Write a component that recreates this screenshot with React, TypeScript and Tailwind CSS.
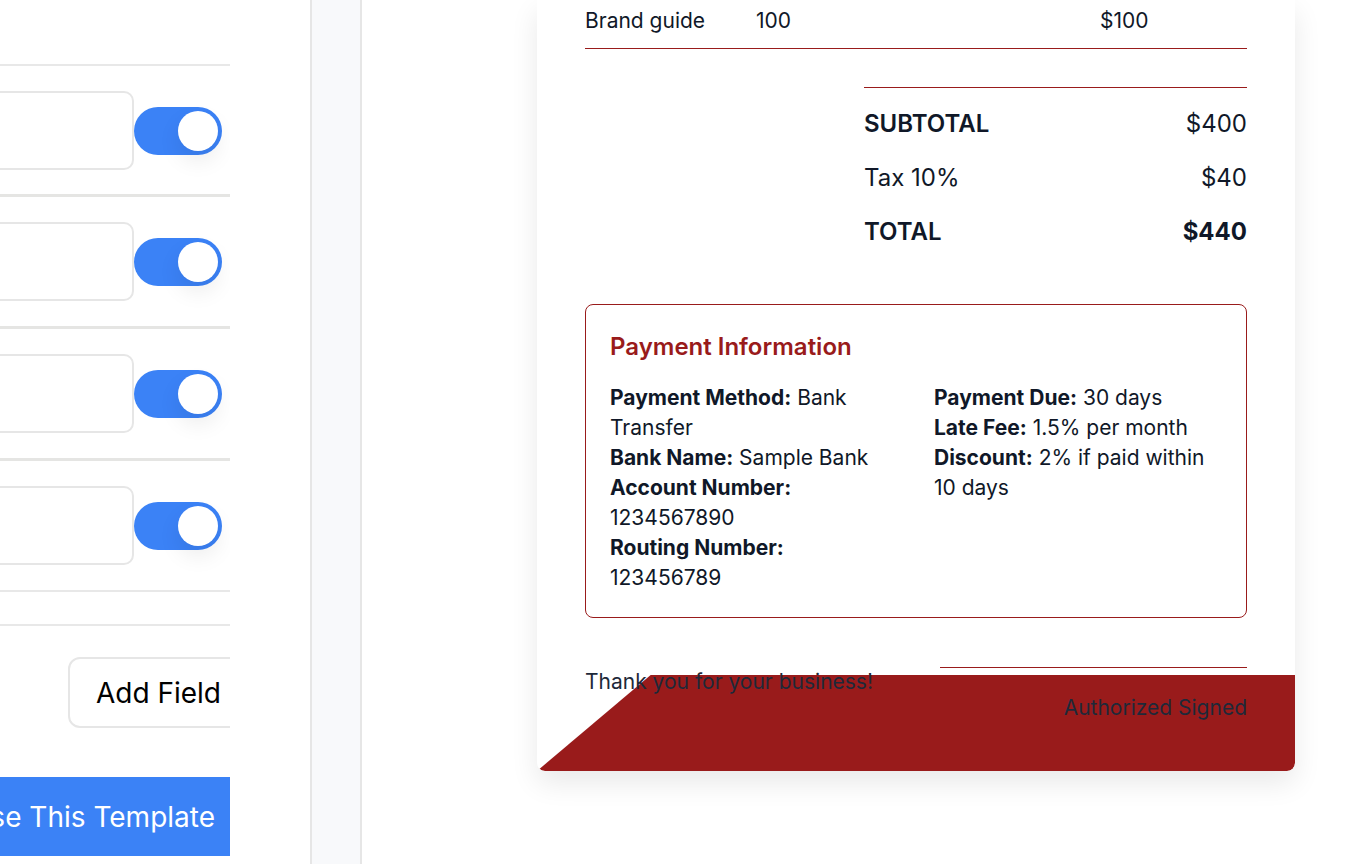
import React from "react";

const fieldRows = [0, 1, 2, 3];

const totals = [
  { label: "SUBTOTAL", value: "$400", strong: "label" },
  { label: "Tax 10%", value: "$40", strong: "none" },
  { label: "TOTAL", value: "$440", strong: "both" },
];

function Toggle() {
  return (
    <div className="flex h-[48px] w-[88px] shrink-0 items-center justify-end rounded-full bg-[#3b82f6] pr-[4px]">
      <span className="h-[40px] w-[40px] rounded-full bg-white shadow-[0_10px_22px_rgba(0,0,0,0.08)]" />
    </div>
  );
}

function FieldRow({ first }: { first: boolean }) {
  return (
    <div
      className={`flex items-center pr-[26px] ${
        first
          ? "border-t-2 border-[#e8e8e8] pt-[25px] pb-[24px]"
          : "border-t-[3px] border-[#e5e5e3] pt-[25px] pb-[25px]"
      }`}
    >
      <div className="h-[79px] flex-1 rounded-[10px] border-2 border-[#e6e6e6] bg-white" />
      <Toggle />
    </div>
  );
}

function EditorPanel() {
  return (
    <div className="flex h-full w-[310px] shrink-0 bg-white">
      <div className="h-full w-[230px] overflow-hidden">
        <div className="-ml-[274px] w-[522px]">
          <div className="h-[64px]" />
          {fieldRows.map((i) => (
            <FieldRow key={i} first={i === 0} />
          ))}
          <div className="h-[34px] border-t-2 border-[#e8e8e8]" />
          <div className="border-t-2 border-[#e8e8e8] pt-[31px]">
            <div className="flex justify-end">
              <button className="h-[71px] rounded-xl border-2 border-[#e6e6e6] bg-white pl-[26px] pr-[25px] text-[28px] text-black">
                Add Field
              </button>
            </div>
            <button className="mt-[49px] flex h-[79px] w-full items-center justify-end bg-[#3b82f6] pr-[33px] text-[28px] text-white">
              Use This Template
            </button>
          </div>
        </div>
      </div>
    </div>
  );
}

function Invoice() {
  return (
    <div className="relative ml-[175px] w-[758px] overflow-hidden rounded-b-lg bg-white px-12 pb-12 text-gray-900 shadow-[0_12px_28px_rgba(0,0,0,0.09)]">
      <div className="grid grid-cols-[171px_344px_1fr] border-b border-[#991b1b] pt-[6px] pb-[12px] text-[21px] leading-[30px]">
        <span>Brand guide</span>
        <span>100</span>
        <span>$100</span>
      </div>

      <div className="ml-auto mt-[38px] w-[383px] border-t border-[#991b1b] pt-[9px] text-2xl">
        {totals.map((t) => (
          <div key={t.label} className="flex h-[54px] items-center justify-between">
            <span className={t.strong === "none" ? "" : "font-semibold"}>{t.label}</span>
            <span className={t.strong === "both" ? "font-bold" : ""}>{t.value}</span>
          </div>
        ))}
      </div>

      <div className="mt-[45px] rounded-lg border border-[#991b1b] p-6">
        <h3 className="mb-[18px] text-2xl leading-[36px] font-semibold text-[#991b1b]">
          Payment Information
        </h3>
        <div className="grid grid-cols-2 gap-x-9 text-[21px] leading-[30px]">
          <div>
            <p>
              <span className="font-bold">Payment Method:</span> Bank Transfer
            </p>
            <p>
              <span className="font-bold">Bank Name:</span> Sample Bank
            </p>
            <p>
              <span className="font-bold">Account Number:</span> 1234567890
            </p>
            <p>
              <span className="font-bold">Routing Number:</span> 123456789
            </p>
          </div>
          <div>
            <p>
              <span className="font-bold">Payment Due:</span> 30 days
            </p>
            <p>
              <span className="font-bold">Late Fee:</span> 1.5% per month
            </p>
            <p>
              <span className="font-bold">Discount:</span> 2% if paid within 10 days
            </p>
          </div>
        </div>
      </div>

      <div className="absolute bottom-0 left-0 right-0 h-[96px] rounded-b-lg bg-[#991b1b] [clip-path:polygon(15%_0,100%_0,100%_100%,0_100%)]" />

      <div className="relative z-10 mt-[49px] flex items-start justify-between text-[21px] leading-[30px] text-gray-800">
        <p>Thank you for your business!</p>
        <div className="w-[307px] border-t border-[#991b1b] pt-[25px] text-right">
          Authorized Signed
        </div>
      </div>
    </div>
  );
}

export default function App() {
  return (
    <div className="flex h-screen w-full overflow-hidden bg-white font-['Inter',sans-serif]">
      <EditorPanel />
      <div className="h-full w-[52px] shrink-0 border-x-2 border-[#e6e6e6] bg-[#f8f9fb]" />
      <main className="h-full flex-1 bg-white">
        <Invoice />
      </main>
    </div>
  );
}
